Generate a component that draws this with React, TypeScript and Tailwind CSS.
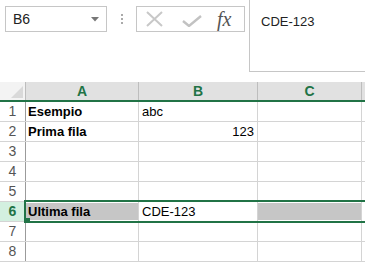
import React from "react";

const FONT = { fontFamily: '"Liberation Sans", Arial, sans-serif' };

type Cell = { text?: string; bold?: boolean; right?: boolean; fill?: boolean };

const ROWS: { n: number; a?: Cell; b?: Cell; c?: Cell; sel?: boolean }[] = [
  { n: 1, a: { text: "Esempio", bold: true }, b: { text: "abc" } },
  { n: 2, a: { text: "Prima fila", bold: true }, b: { text: "123", right: true } },
  { n: 3 },
  { n: 4 },
  { n: 5 },
  { n: 6, a: { text: "Ultima fila", bold: true, fill: true }, b: { text: "CDE-123" }, c: { fill: true }, sel: true },
  { n: 7 },
  { n: 8 },
];

function CellBox({ cell, w }: { cell?: Cell; w: string }) {
  return (
    <div className={`${w} h-full shrink-0 border-r border-[#d4d4d4] flex items-center`}>
      {cell?.fill ? (
        <div className="h-[17px] w-full bg-[#c6c6c6] flex items-center pl-[2px] text-[13px] font-bold text-black">
          {cell?.text}
        </div>
      ) : (
        <span
          className={`w-full px-[3px] text-[13px] text-black ${cell?.bold ? "font-bold pl-[2px]" : ""} ${cell?.right ? "text-right" : ""}`}
        >
          {cell?.text}
        </span>
      )}
    </div>
  );
}

export default function App() {
  return (
    <div className="w-[365px] h-[263px] overflow-hidden bg-white relative" style={FONT}>
      {/* formula bar */}
      <div className="h-[82px] flex items-start">
        <div className="shrink-0 mt-[6px] ml-[5px] w-[102px] h-[26px] border border-[#c6c6c6] flex items-center pl-[7px] pr-[7px]">
          <span className="text-[14px] text-[#222] flex-1">B6</span>
          <svg width="8" height="5" viewBox="0 0 8 5">
            <path d="M0 0 H8 L4 4.5 Z" fill="#777" />
          </svg>
        </div>
        <div className="shrink-0 ml-[14px] mt-[14px] flex flex-col gap-[2px]">
          <div className="w-[2px] h-[2px] bg-[#aaa]" />
          <div className="w-[2px] h-[2px] bg-[#aaa]" />
          <div className="w-[2px] h-[2px] bg-[#aaa]" />
        </div>
        <div className="shrink-0 ml-[13px] mt-[6px] w-[109px] h-[26px] border border-[#c6c6c6] flex items-center">
          <svg className="ml-[9px]" width="17" height="16" viewBox="0 0 17 16">
            <path d="M1 1 L16 15 M16 1 L1 15" stroke="#c8c8c8" strokeWidth="2" fill="none" />
          </svg>
          <svg className="ml-[19px] mt-[3px]" width="20" height="12" viewBox="0 0 20 12">
            <path d="M1 6 L7 11 L19 1" stroke="#c2c2c2" strokeWidth="2.4" fill="none" />
          </svg>
          <span
            className="ml-[15px] text-[20px] italic text-[#555] leading-none"
            style={{ fontFamily: '"Liberation Serif", "Times New Roman", serif' }}
          >
            fx
          </span>
        </div>
        <div className="shrink-0 ml-[4px] w-[130px] h-[72px] border-l border-b border-[#c6c6c6] pl-[11px] pt-[9px]">
          <span className="text-[13px] text-[#222]">CDE-123</span>
        </div>
      </div>

      {/* column headers */}
      <div className="h-[20px] flex border-b-2 border-[#217346]">
        <div className="w-[26px] h-full shrink-0 bg-[#f3f3f3] border-r border-[#bdbdbd] relative">
          <svg className="absolute right-[2px] bottom-[2px]" width="12" height="12" viewBox="0 0 12 12">
            <path d="M12 0 V12 H0 Z" fill="#d9d9d9" />
          </svg>
        </div>
        {[
          ["A", "w-[113px]"],
          ["B", "w-[119px]"],
          ["C", "w-[104px]"],
        ].map(([l, w]) => (
          <div
            key={l}
            className={`${w} h-full shrink-0 bg-[#e1e1e1] border-r border-[#bdbdbd] flex items-center justify-center text-[14px] font-bold text-[#217346]`}
          >
            {l}
          </div>
        ))}
        <div className="flex-1 h-full bg-[#e1e1e1]" />
      </div>

      {/* rows */}
      {ROWS.map((r) => (
        <div key={r.n} className="h-[20px] flex border-b border-[#d4d4d4]">
          <div
            className={`w-[26px] h-full shrink-0 border-r border-[#9b9b9b] flex items-center justify-center text-[14px] ${
              r.sel ? "bg-[#d3f0e0] text-[#217346] font-bold" : "text-[#555]"
            }`}
          >
            {r.n}
          </div>
          <CellBox cell={r.a} w="w-[113px]" />
          <CellBox cell={r.b} w="w-[119px]" />
          <CellBox cell={r.c} w="w-[104px]" />
          <div className="flex-1" />
        </div>
      ))}

      {/* row selection border */}
      <div className="absolute left-[24px] top-[200px] w-[360px] h-[23px] border-2 border-[#217346] pointer-events-none" />
      <div className="absolute left-[24px] top-[218px] w-[6px] h-[5px] bg-[#217346]" />
    </div>
  );
}
